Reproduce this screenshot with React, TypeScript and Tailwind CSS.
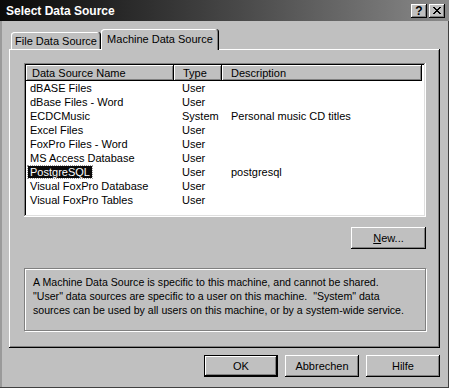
import React from "react";

const ROWS: { name: string; type: string; desc: string; selected?: boolean }[] = [
  { name: "dBASE Files", type: "User", desc: "" },
  { name: "dBase Files - Word", type: "User", desc: "" },
  { name: "ECDCMusic", type: "System", desc: "Personal music CD titles" },
  { name: "Excel Files", type: "User", desc: "" },
  { name: "FoxPro Files - Word", type: "User", desc: "" },
  { name: "MS Access Database", type: "User", desc: "" },
  { name: "PostgreSQL", type: "User", desc: "postgresql", selected: true },
  { name: "Visual FoxPro Database", type: "User", desc: "" },
  { name: "Visual FoxPro Tables", type: "User", desc: "" },
];

const RAISED =
  "shadow-[inset_-1px_-1px_0_#000,inset_1px_1px_0_#fff,inset_-2px_-2px_0_#808080]";

function Button({
  children,
  isDefault = false,
  className = "",
}: {
  children: React.ReactNode;
  isDefault?: boolean;
  className?: string;
}) {
  return (
    <button
      className={`flex h-[22px] items-center justify-center bg-[#c0c0c0] text-[11px] text-black ${
        isDefault
          ? "shadow-[inset_0_0_0_1px_#000,inset_-2px_-2px_0_#000,inset_2px_2px_0_#fff,inset_-3px_-3px_0_#808080]"
          : RAISED
      } ${className}`}
    >
      {children}
    </button>
  );
}

function HeaderCell({ children, className = "" }: { children?: React.ReactNode; className?: string }) {
  return (
    <div className={`flex h-[16px] items-center bg-[#c0c0c0] ${RAISED} ${className}`}>
      {children}
    </div>
  );
}

export default function App() {
  return (
    <div className="flex h-[388px] w-[449px] flex-col bg-[#c0c0c0] font-['Liberation_Sans',Arial,sans-serif] text-[11px] text-black shadow-[inset_-1px_-1px_0_#404040,inset_2px_0_0_#9a9a9a]">
      {/* title bar */}
      <div className="flex h-[21px] items-center bg-linear-to-r from-[#0a0a0a] to-[#8a8a8a] pl-[6px] pr-[4px]">
        <span className="flex-1 text-[12px] font-bold text-white">Select Data Source</span>
        <div className="flex gap-[2px]">
          <div className={`flex h-[14px] w-[16px] items-center justify-center bg-[#c0c0c0] text-[12px] font-bold leading-none ${RAISED}`}>
            ?
          </div>
          <div className={`flex h-[14px] w-[16px] items-center justify-center bg-[#c0c0c0] ${RAISED}`}>
            <svg width="8" height="7" viewBox="0 0 8 7" shapeRendering="crispEdges">
              <path d="M0 0h2v1h-2zM6 0h2v1h-2zM1 1h2v1h-2zM5 1h2v1h-2zM2 2h4v1h-4zM3 3h2v1h-2zM2 4h4v1h-4zM1 5h2v1h-2zM5 5h2v1h-2zM0 6h2v1h-2zM6 6h2v1h-2z" fill="#000" />
            </svg>
          </div>
        </div>
      </div>

      {/* tabs */}
      <div className="mt-[8px] px-[9px]">
        <div className="relative z-10 flex h-[20px] items-end pl-[2px]">
          <div className="flex h-[17px] w-[90px] items-center justify-center rounded-t-[3px] bg-[#c0c0c0] pt-[1px] shadow-[inset_-1px_0_0_#000,inset_1px_1px_0_#fff,inset_-2px_0_0_#808080]">
            File Data Source
          </div>
          <div className="-mb-[1px] flex h-[21px] w-[118px] items-center justify-center rounded-t-[3px] bg-[#c0c0c0] pb-[1px] shadow-[inset_-1px_0_0_#000,inset_1px_1px_0_#fff,inset_-2px_0_0_#808080]">
            Machine Data Source
          </div>
        </div>

        {/* panel */}
        <div className="h-[299px] pl-[15px] pt-[14px] shadow-[inset_-1px_-1px_0_#000,inset_1px_1px_0_#fff,inset_-2px_-2px_0_#808080]">
          {/* list */}
          <div className="h-[154px] w-[402px] bg-white p-[2px] shadow-[inset_-1px_-1px_0_#fff,inset_1px_1px_0_#808080,inset_-2px_-2px_0_#dfdfdf,inset_2px_2px_0_#000]">
            <div className="flex">
              <HeaderCell className="w-[148px] pl-[6px]">Data Source Name</HeaderCell>
              <HeaderCell className="w-[48px] pl-[9px]">Type</HeaderCell>
              <HeaderCell className="w-[200px] pl-[9px]">Description</HeaderCell>
            </div>
            {ROWS.map((r) => (
              <div key={r.name} className="flex h-[14px] items-center">
                <div className="w-[148px] pl-[2px]">
                  <span
                    className={`px-[2px] ${
                      r.selected ? "bg-[#0a0a0a] text-white outline-1 outline-dotted outline-[#9a9a9a]" : ""
                    }`}
                  >
                    {r.name}
                  </span>
                </div>
                <div className="w-[48px] pl-[8px]">{r.type}</div>
                <div className="pl-[9px]">{r.desc}</div>
              </div>
            ))}
          </div>

          <div className="mt-[10px] flex w-[402px] justify-end">
            <Button className="w-[75px]">
              <span>
                <span className="underline">N</span>ew...
              </span>
            </Button>
          </div>

          {/* info box */}
          <div className="mt-[19px] h-[63px] w-[402px] border border-[#808080] pl-[8px] pt-[6px] text-[10.6px] leading-[14px] shadow-[inset_1px_1px_0_#fff,1px_1px_0_#fff]">
            <div>A Machine Data Source is specific to this machine, and cannot be shared.</div>
            <div className="whitespace-pre">"User" data sources are specific to a user on this machine.  "System" data</div>
            <div>sources can be used by all users on this machine, or by a system-wide service.</div>
          </div>
        </div>
      </div>

      {/* bottom buttons */}
      <div className="mt-[7px] flex justify-end gap-[7px] pr-[9px]">
        <Button isDefault className="w-[74px]">OK</Button>
        <Button className="w-[74px]">Abbrechen</Button>
        <Button className="w-[74px]">Hilfe</Button>
      </div>
    </div>
  );
}
